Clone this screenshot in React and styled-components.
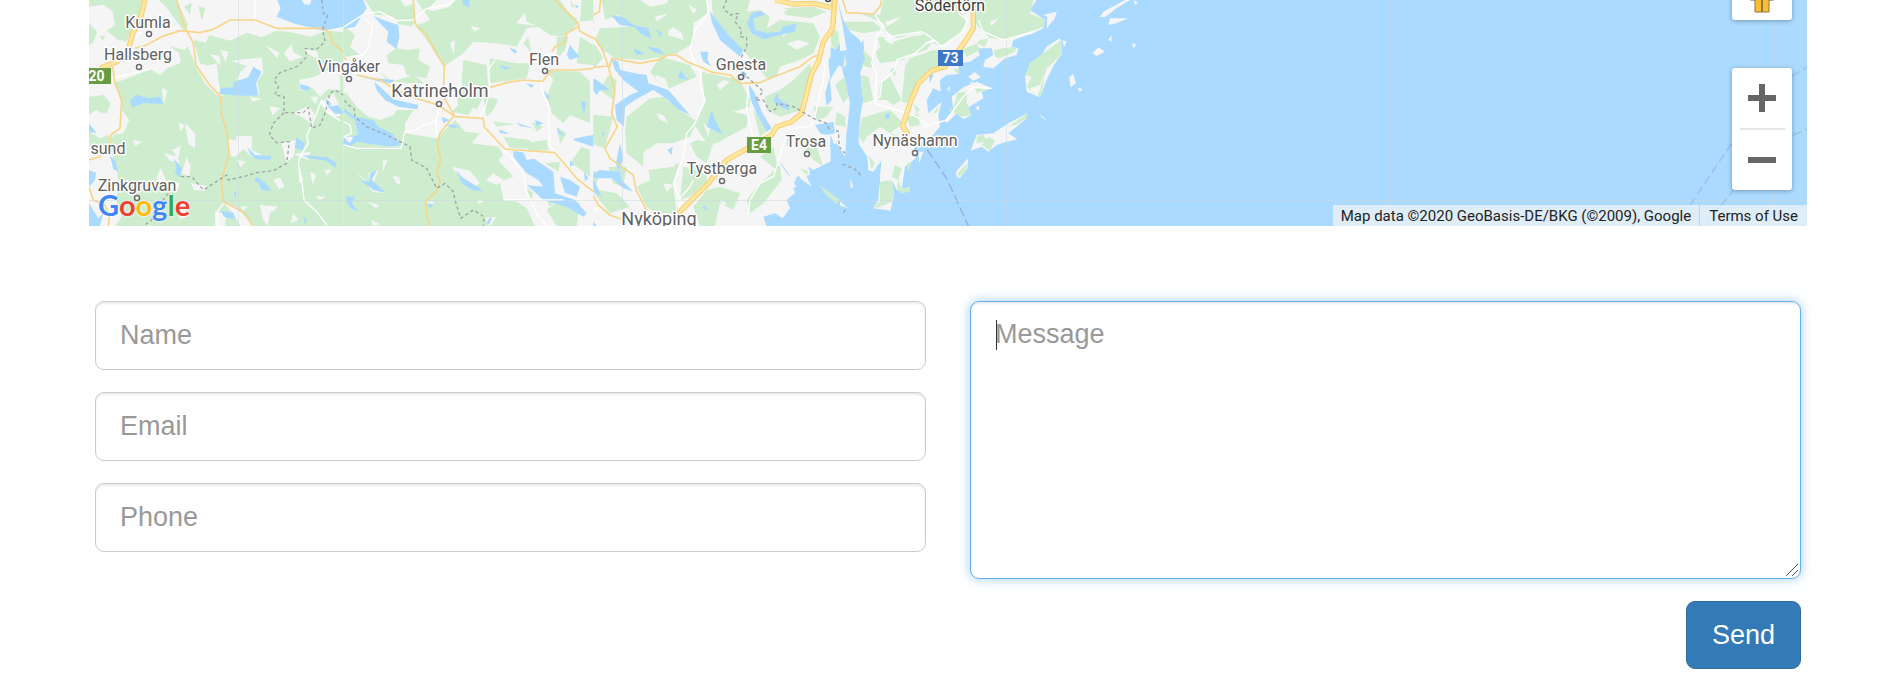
import React from "react";
import styled, { createGlobalStyle } from "styled-components";

const GlobalStyle = createGlobalStyle`
  *, *::before, *::after { box-sizing: border-box; }
  body {
    margin: 0;
    background: #fff;
    color: #333;
    font-family: "Liberation Sans", Arial, sans-serif;
  }
`;

const Page = styled.main`
  padding: 0 82px 13px 89px;
`;

const MapFrame = styled.section`
  position: relative;
  height: 226px;
  overflow: hidden;
  background: #aadaff;
  font-family: Roboto, Arial, sans-serif;
`;

const MapCanvas = styled.svg`
  display: block;
  width: 100%;
  height: 100%;
`;

const PlaceName = styled.text`
  font-size: ${(p) => (p.$size === "large" ? 18 : 16)}px;
  fill: ${(p) => (p.$dark ? "#3c3c3c" : "#616161")};
  stroke: #fff;
  stroke-width: 3px;
  stroke-linejoin: round;
  paint-order: stroke;
  text-anchor: middle;
`;

const ShieldText = styled.text`
  font-size: 14px;
  font-weight: 700;
  fill: #fff;
  text-anchor: middle;
`;

const MapControls = styled.div`
  position: absolute;
  right: 15px;
  bottom: 36px;
  display: flex;
  flex-direction: column;
  gap: 48px;
`;

const ControlBox = styled.div`
  display: flex;
  flex-direction: column;
  align-items: center;
  width: 60px;
  background: #fff;
  border-radius: 3px;
  box-shadow: 0 1px 5px rgba(0, 0, 0, 0.3);
`;

const ControlButton = styled.button`
  display: flex;
  align-items: center;
  justify-content: center;
  width: 60px;
  height: 60px;
  padding: 0;
  border: 0;
  background: transparent;
  cursor: pointer;
`;

const ControlDivider = styled.span`
  width: 45px;
  height: 2px;
  background: #e6e6e6;
`;

const GoogleLink = styled.a`
  position: absolute;
  left: 9px;
  bottom: 3px;
  font-family: Lato, sans-serif;
  font-size: 29px;
  font-weight: 700;
  line-height: 36px;
  text-decoration: none;
  text-shadow: 0 0 2px #fff, 0 0 2px #fff;
`;

const LogoLetter = styled.span`
  color: ${(p) => p.$color};
`;

const Attribution = styled.div`
  position: absolute;
  right: 0;
  bottom: 0;
  display: flex;
  gap: 1px;
  height: 21px;
  color: #222;
  font-size: 15px;
  line-height: 23px;
  white-space: nowrap;
`;

const Credit = styled.span`
  padding: 0 8px;
  background: rgba(245, 245, 245, 0.7);
`;

const TermsLink = styled.a`
  padding: 0 9px;
  background: rgba(245, 245, 245, 0.7);
  color: inherit;
  text-decoration: none;
`;

const ContactForm = styled.form`
  display: grid;
  grid-template-columns: 1fr 1fr;
  gap: 44px;
  padding: 75px 6px 0;
`;

const Column = styled.div`
  display: flex;
  flex-direction: column;
  gap: 22px;
`;

const fieldStyle = `
  display: block;
  width: 100%;
  border: 1px solid #ccc;
  border-radius: 9px;
  background: #fff;
  color: #555;
  font-family: inherit;
  font-size: 27px;
  line-height: 36px;
  box-shadow: inset 0 2px 2px rgba(0, 0, 0, 0.075);
  outline: 0;

  &::placeholder { color: #999; opacity: 1; }
  &:focus {
    border-color: #66afe9;
    box-shadow: inset 0 2px 2px rgba(0, 0, 0, 0.075), 0 0 12px rgba(102, 175, 233, 0.6);
  }
`;

const TextField = styled.input`
  ${fieldStyle}
  height: 69px;
  padding: 0 24px;
`;

const MessageBox = styled.div`
  position: relative;
`;

const MessageField = styled.textarea`
  ${fieldStyle}
  height: 278px;
  padding: 14px 24px;
  resize: vertical;
  caret-color: transparent;

  &:not(:placeholder-shown) { caret-color: auto; }
  &:not(:placeholder-shown) + span { display: none; }
  &:not(:focus) + span { display: none; }
  &::-webkit-resizer { background: transparent; }
`;

const Caret = styled.span`
  position: absolute;
  top: 19px;
  left: 26px;
  width: 1px;
  height: 30px;
  background: #333;
  pointer-events: none;
`;

const ResizeGrip = styled.svg`
  position: absolute;
  right: 2px;
  bottom: 2px;
  pointer-events: none;
`;

const SendButton = styled.button`
  align-self: flex-end;
  height: 68px;
  padding: 0 25px;
  border: 1px solid #2e6da4;
  border-radius: 9px;
  background: #337ab7;
  color: #fff;
  font-family: inherit;
  font-size: 27px;
  line-height: 36px;
  cursor: pointer;
`;

const WATER = "#aadaff";
const LAND = "#f5f5f5";
const FOREST = "#ceedcf";

/* Map sheets: each is drawn at three times its size from its own left edge. */
const sheets = [
  {
    x: 80,
    shapes: [
      [LAND, "M0 0H790V678H0Z"],
      [FOREST, "M27 0H190L180 45 158 80 140 125 112 118 80 92 105 75 98 35 70 14 27 20ZM236 0H290L325 75 312 92 290 65 262 25ZM27 70L52 95 38 130 27 135ZM58 108L76 106 68 124ZM355 20L376 24 366 62ZM312 20L335 8 330 45Z"],
      [FOREST, "M95 250L130 240 210 208 240 225 262 205 302 188 298 160 268 138 312 150 345 120 378 128 388 105 450 122 500 98 545 112 590 92 630 96 690 110 740 92 790 96V678H100L122 640 95 600 62 560 50 500 45 460 90 420 118 385 124 310 105 250Z"],
      [FOREST, "M27 290L70 285 92 310 78 345 48 330 27 345ZM27 395L60 415 85 405 92 430 60 450 27 440ZM52 600L80 620 70 650 48 625Z"],
      [LAND, "M290 95L335 105 360 190 410 205 415 245 428 292 410 285 375 250 350 205 320 130ZM355 205L410 190 415 230ZM388 162L418 168 422 196ZM420 150L445 155 437 186ZM452 182L545 172 550 218 532 245 538 285 515 265 470 238 482 215 500 198ZM556 136L598 158 592 175ZM612 160L635 132 640 158 668 170 630 185ZM672 148L712 154 716 178 690 165ZM658 240L700 232 735 215 780 200V270L745 268 720 290 695 262 660 272ZM690 290L715 290 708 312ZM720 310L760 280 780 320V350L750 345ZM125 330L148 360 130 400 90 405 105 372ZM40 340L78 338 80 365 55 398 38 370ZM245 262L262 272 252 312ZM508 290L545 296 518 305ZM568 318L600 325 578 346ZM640 338L685 318 705 345 690 368 665 350ZM296 365L314 378 300 394ZM315 370L345 400 345 445 325 432ZM160 420L188 425 165 438ZM275 450L302 438 295 475ZM320 472L332 498 328 530 305 520ZM250 458L292 470 300 490 270 482ZM446 418L470 420 468 408 516 408 515 450 545 465 515 470 490 448 465 472 450 465ZM470 480L498 485 482 502ZM604 430L650 420 640 470 620 488ZM640 462L690 455 685 480ZM580 540L600 532 614 560 598 568ZM655 502L670 540 658 550ZM690 515L708 525 698 555ZM732 510L756 508 742 526ZM705 588L738 590 720 600ZM242 505L260 545 300 548 290 575 262 560 240 572 225 545ZM332 550L380 558 375 572 342 570ZM540 615L595 620 570 640 563 678 550 660ZM482 620L505 618 490 632ZM282 620L310 610 325 648 300 658ZM405 635L440 640 435 678H405ZM430 608L470 620 520 678H480L460 640ZM632 670L640 640 655 660Z"],
      [LAND, "M27 450L60 460 90 450 110 500 115 550 108 600 125 650 105 678H27Z"],
      [WATER, "M592 0H665L675 15 690 0H790V80L730 92 640 70 590 50 602 25ZM520 200L545 215 528 250 535 285 505 288 418 282 422 264 460 262 462 246 505 232ZM150 300L170 285 205 295 240 290 250 312 190 310 156 322ZM660 252L690 260 686 272 662 268ZM27 370L50 400 27 395ZM90 468L105 480 115 515 100 508ZM280 475L305 502 300 532 285 520 290 500ZM502 442L525 465 575 468 570 480 530 478 512 465ZM648 412L675 430 668 450 645 445ZM670 465L740 472 770 488 765 504 740 482 682 474ZM530 530L552 545 575 572 545 570 535 548 522 545ZM462 575L470 580 464 598ZM422 632L460 638 465 658 432 650ZM27 610L55 655 70 640 60 678H27ZM27 510L48 518 45 540 27 560ZM672 652L682 660 674 672ZM745 320L775 315 790 340 765 342ZM735 295L755 312 745 322Z"],
      [LAND, "M665 0H695L688 15 675 12Z"],
    ],
    minor: "M95 235L210 208M170 110L205 65M525 60V0M525 62L532 70M780 362L740 335 725 300 710 340 680 408 685 430 660 470 655 490 668 560 672 600 710 635 740 675M412 678V635L430 610",
    roads: "M290 0L312 75 340 130 348 195 385 250 422 290 425 345 442 400 447 460 425 540 430 605 460 620 495 640 518 678M165 145L200 135 245 110 300 92 360 98 400 88 450 60 525 60 590 85 730 85 750 100 758 130 790 155M98 200L105 250 125 300 120 385 92 405 90 430 60 470 27 480M27 560L40 600 75 615 88 650 85 678",
    highway: "M195 0L180 60 158 100 145 150 110 185 60 205",
    borders: "M725 0L730 40 743 45 728 90 735 125 710 148 675 145 680 170 655 198 600 218 582 240 595 260 585 285 612 290 612 338 670 338 685 322 695 385 720 375 735 340 750 280 765 270 790 285M612 338L580 370 568 405 590 428 628 425 620 490 580 512 530 518 490 530 445 540 440 525 370 570 335 530 295 530M265 580L230 625 215 660 190 678",
  },
  {
    x: 330,
    shapes: [
      [LAND, "M0 0H790V678H0Z"],
      [FOREST, "M105 0H212L225 20 250 10 255 60 245 80 205 72 190 50 155 45 135 45ZM258 0H690L715 35 745 70 720 95 700 110 660 105 625 80 590 85 560 140 500 130 430 125 400 160 340 200 300 135 275 100 255 78 300 60 280 30ZM0 105L45 80 75 105 60 140 90 165 48 170 25 145ZM170 165L200 145 235 150 270 145 265 180 300 200 290 235 230 225 220 195 175 190ZM150 215L185 245 250 225 285 250 225 250 170 240Z"],
      [FOREST, "M0 275L50 280 80 320 115 350 150 360 190 345 200 330 250 330 225 370 225 400 320 415 375 360 405 395 450 400 425 430 505 440 520 465 505 480 550 530 510 545 520 600 560 605 590 625 615 678H0ZM400 180L470 195 475 260 440 330 400 295 395 240ZM375 275L410 270 440 310 415 345 365 335 385 315ZM480 175L560 190 600 190 590 235 480 250ZM650 210L750 215 780 245V370L720 345 700 370 665 340 650 290 670 240ZM460 290L505 298 490 330 470 350ZM490 365L555 372 500 380ZM520 410L600 420 610 445 540 445ZM605 365L640 380 620 395ZM580 130L595 110 605 160ZM680 380L710 400 690 432ZM645 490L690 485 685 515ZM720 490L755 440 780 450V530L740 500ZM600 470L650 500 630 510ZM690 20L745 60 700 45ZM755 0H790V60L750 65ZM680 110L715 110 705 150 680 180ZM750 110L790 135V195L740 190ZM580 430L650 420 655 450 600 455ZM700 590L750 610 740 678H680L650 630ZM640 585L680 600 660 620ZM590 560L610 580 600 608Z"],
      [LAND, "M320 0L375 0 360 20 312 32 290 30ZM422 78L453 85 432 95ZM558 70L585 38 590 65 620 78ZM360 130L375 120 372 165ZM0 450L22 445 5 465ZM160 480L172 482 158 515ZM188 528L208 530 212 555 200 550ZM112 605L148 615 138 625ZM122 660L150 672 130 678ZM80 515L120 555 115 520 145 510 130 550 168 580 128 575ZM365 500L420 512 450 550 430 560 400 545ZM290 605L315 605 298 625ZM440 600L462 602 448 612ZM465 655L500 650 480 678ZM468 540L490 520 520 540 500 555ZM530 135L565 142 560 162Z"],
      [WATER, "M0 0H100L110 25 75 80 0 95ZM130 48L160 60 205 75 208 110 200 148 170 125 175 95 155 75ZM398 0H418V24L398 12ZM75 222L130 235 195 240 180 250 150 245 110 235ZM132 245L155 265 190 298 265 315 262 328 205 320 165 300 140 270ZM335 350L360 360 340 370ZM345 372L392 378 370 385ZM15 310L40 325 75 350 130 360 145 380 185 400 215 435 180 440 80 425 60 440 25 435 22 415 85 405 75 360 40 335ZM140 510L125 540 170 580 130 570 90 540 118 545 120 520ZM50 588L75 592 65 610 85 635 62 625 50 605ZM378 510L395 530 460 572 430 572 395 550ZM478 655L486 655 478 672 470 670ZM292 608L312 615 298 625ZM735 12L748 20 738 25ZM536 142L562 152 555 162ZM505 198L540 200 528 210ZM720 135L748 170 720 180 710 165ZM588 250L612 255 605 265ZM640 270L660 290 652 300ZM560 368L608 385 570 378ZM615 360L640 370 620 378ZM508 388L540 402 510 400ZM680 382L705 410 685 400ZM735 415L790 405V440L730 420ZM550 452L590 460 625 485 670 515 675 580 735 600 770 640 760 650 710 620 640 600 590 555 640 560 625 540 590 520 550 470ZM690 530L720 540 750 560 740 590 705 578ZM720 480L730 495 720 500Z"],
      [LAND, "M40 410L70 410 60 430ZM580 455L620 475 590 480Z"],
      [FOREST, "M720 0L735 20 725 22ZM720 250L755 265 735 285ZM705 300L740 310 715 330ZM745 480L765 475 760 500Z"],
      [WATER, "M752 300L768 310 762 345ZM762 515L775 535 765 545Z"],
    ],
    minor: "M0 95L40 82 105 40 150 35 200 62 250 60 290 25 350 15 375 0M105 55L128 80 115 140 100 165 60 170M0 345L60 375 65 400 30 415 25 430 80 445 212 445 225 395 255 392 280 375 315 365 330 320M318 360L322 410M495 180L475 210 480 260 470 310 450 352M635 245L638 280 660 325 655 350 660 440 690 470M520 450L545 475 580 520 590 575 620 640 650 678M520 600L700 600",
    roads: "M250 0L255 70 290 105 325 170 343 195 340 290 375 350M80 225L150 240 200 270 260 295 325 315 375 350 460 355 462 380 525 447 675 458 740 535 790 575M480 262L530 248 580 240 638 244 665 210 740 210 790 205M675 0L745 70 748 92 790 115M665 155L675 140 705 125 710 100 745 80M0 105L18 145 50 180M370 350L330 400 322 430 332 480 320 520 330 545 320 575 288 602 290 645 300 678",
    borders: "M0 272L25 280 55 315 72 325 75 350 110 380 170 405 240 440 245 480 290 505 320 565 345 550 370 575 375 600 392 655 430 630 462 650 460 678",
  },
  {
    x: 580,
    shapes: [
      [LAND, "M0 0H752V678H0Z"],
      [FOREST, "M65 0H180L210 20 260 10 265 0H380L382 40 340 70 340 130 290 160 245 170 190 180 105 175 70 150 45 120 60 85 150 80 115 45 75 60ZM0 60L45 65 25 90 0 95ZM395 0H510L500 35 540 30 570 50 560 85 600 60 700 70 720 110 700 160 660 180 600 200 590 230 560 235 490 150 450 120 400 60ZM600 25L700 20 740 35 690 55 620 45ZM240 170L330 195 350 230 270 265 230 240 210 215ZM365 215L480 240 510 300 500 380 410 430 380 430 340 370 375 310Z"],
      [FOREST, "M140 350L210 295 250 290 330 350 350 365 330 410 280 430 230 430 190 460 190 500 140 460 135 400ZM0 100L50 140 70 175 40 205 0 190ZM85 225L110 240 100 300 60 270ZM330 430L350 420 400 430 380 490 350 470ZM0 340L100 350 75 445 30 430ZM170 560L210 540 205 510 280 500 300 480 280 555 290 640 230 640 200 620ZM310 500L380 510 380 545 330 590 300 600ZM490 320L510 315 500 350 475 345ZM555 290L600 270 640 240 690 190 700 240 665 330 600 350 560 330ZM520 330L570 385 540 410ZM380 570L420 560 480 580 460 630 420 610 405 678H360L340 620ZM530 560L600 495 605 540 550 610 510 640 500 600ZM540 470L580 440 600 480 590 510ZM620 395L640 420 620 440ZM670 440L710 440 730 500 700 480ZM630 555L645 550 640 570ZM85 500L140 500 130 560 100 550ZM0 500L60 520 50 550 0 550ZM30 565L110 580 150 620 90 640ZM700 320L760 320 740 350 710 360ZM410 260L450 280 430 300Z"],
      [LAND, "M265 92L280 82 305 98 310 120 265 105ZM345 90L375 70 400 110 370 130ZM325 12L350 30 340 42ZM580 15L625 30 590 45ZM620 130L655 120 690 130 650 150ZM600 95L640 85 610 110ZM230 340L250 345 265 370 238 358ZM410 255L430 240 450 245 420 270ZM460 335L510 320 500 345ZM370 370L390 385 385 410ZM195 450L330 420 300 490 205 505 190 490ZM250 550L280 555 260 575ZM420 600L440 610 430 620ZM450 645L478 635 475 660ZM580 435L635 445 620 470 590 490ZM150 215L175 190 180 225ZM225 50L265 40 230 65Z"],
      [WATER, "M92 45L130 52 160 75 205 85 215 118 180 100 165 82 120 75ZM228 88L245 98 240 112ZM160 145L195 160 170 165ZM200 140L235 145 255 165 220 155ZM500 70L515 40 545 32 555 45 520 55 525 90 560 98 600 95 610 80 650 70 645 95 600 105 550 118 515 100ZM390 35L450 110 490 150 480 170 420 120 395 65ZM360 155L385 155 382 180 395 200 370 185ZM480 210L500 220 495 238ZM95 178L115 185 120 210 165 220 200 225 205 250 265 270 330 345 290 325 265 300 220 270 165 300 135 320 132 380 110 360 105 315 150 285 175 275 130 240 105 210ZM300 210L325 240 295 235ZM0 215L30 230 50 240 90 270 60 270 50 285 20 245ZM0 320L25 360 0 350ZM65 395L75 400 70 412ZM395 330L405 360 430 405 400 390 380 380ZM505 250L525 280 545 335 575 385 560 395 530 340 512 300ZM580 305L590 280 600 300 630 318 625 330 600 320ZM780 130L745 180 750 230 735 280 740 318 755 300 750 240 780 190ZM705 375L760 365 765 400 740 405 720 400ZM120 430L130 475 115 515 108 490ZM0 410L40 440 20 450 0 445ZM0 515L40 520 60 510 120 515 125 540 160 575 130 565 95 535 40 535 65 590 30 570ZM262 450L278 440 275 465ZM22 640L50 678H32ZM600 485L625 520 640 560 620 545ZM365 620L378 618 380 632Z"],
      [WATER, "M752 405L750 440 770 455 760 480 720 500 700 510 685 500 690 525 650 530 640 555 645 580 620 600 630 625 608 655 585 640 550 650 560 678H780V480Z"],
      [LAND, "M655 495L690 510 680 530 695 560 660 535ZM600 490L650 560 620 570ZM225 225L255 235 265 260 230 240Z"],
      [FOREST, "M660 505L685 512 680 525ZM718 555L780 600 770 612 735 580ZM475 0L490 15 475 20Z"],
    ],
    minor: "M380 0L385 40 345 90 330 150 345 190 362 220 360 250 375 300 345 370 320 400 310 470 280 550 300 600 298 640M505 250L500 330 518 410M0 678L30 640 60 620M340 540L330 560 300 595M505 640L510 600 540 550 580 530 600 470 610 430 640 385 690 380 705 350 715 300 730 240 735 200 720 150M605 372L640 390",
    roads: "M62 0L58 35 0 65M0 92L45 115 70 155 85 200 105 270 95 340 112 380 75 445 90 475 160 525 168 570 200 630M0 205L90 198 95 175 180 190 240 178 265 165 290 165 320 185 360 200 400 218 450 225 480 250 540 248 570 235 660 200 700 170 720 165M0 545L30 570 55 615 90 645 125 658",
    highway: "M585 0L640 12 700 10 752 22M765 0L758 85 730 125 715 185 695 220 665 340 635 365 590 380 575 405 530 430 440 480 385 550 335 600 295 640",
    borders: "M440 0L430 25 450 45 475 40 465 65 485 90 480 110 500 112 500 140 485 170 490 220 550 275 525 300 550 300 570 335 590 325 590 310 640 320 700 355 740 370 750 395",
  },
  {
    x: 830,
    shapes: [
      [LAND, "M0 0H620L600 30 645 60 640 85 610 100 550 120 545 140 565 145 560 165 525 175 490 205 460 200 465 180 490 165 485 145 440 145 450 165 420 185 385 190 388 222 350 225 330 240 332 275 310 265 290 300 295 340 335 305 325 345 330 380 300 415 250 430 258 475 225 500 215 570 240 560 235 575 200 570 185 540 192 580 182 632 130 625 145 600 150 540 155 480 130 515 115 510 112 470 85 430 90 350 100 300 90 220 105 180 100 120 40 205 45 160 0 140Z"],
      [LAND, "M10 190L35 200 60 310 50 400 45 470 20 430 0 440V230Z"],
      [FOREST, "M160 0H375L395 40 410 70 380 110 335 140 300 125 270 95 200 115 170 95 160 70 90 40 150 45ZM420 0H610L600 40 645 60 640 80 540 118 480 115 440 75ZM40 65L130 65 160 90 100 100 60 90ZM45 160L82 165 80 200 45 195ZM100 150L130 180 125 205 95 195ZM130 115L160 110 175 130 240 110 280 105 315 115 290 150 240 165 220 180 150 190 140 170ZM240 175L310 150 335 155 330 200 300 215 260 250 230 310 215 305 225 200ZM92 225L115 230 130 300 100 310ZM150 250L180 230 215 300 190 315 170 300 145 300ZM180 210L200 200 195 230ZM95 355L140 340 180 330 220 370 180 400 150 380 110 410 100 430 85 410ZM230 350L265 340 270 375 240 380ZM180 400L215 410 200 430ZM395 150L440 130 450 150 410 170ZM450 120L475 115 465 140 440 130ZM490 150L520 145 560 140 555 155 510 175 495 170ZM370 210L385 205 388 225ZM115 465L135 490 125 510ZM195 495L215 505 205 540 185 530ZM205 540L215 565 235 565 240 575 215 580 200 565ZM150 545L185 540 192 580 185 605 140 625 132 615 150 605ZM232 490L245 485 235 515ZM250 310L270 330 260 340ZM0 85L25 95 30 150 5 140ZM15 255L45 230 55 290 40 310ZM20 335L45 350 48 380 15 375Z"],
      [LAND, "M165 65L215 50 195 65 170 80ZM280 130L310 118 325 125ZM480 65L505 55 485 78ZM108 112L140 105 150 140 135 160 120 150ZM160 110L185 105 190 135 165 120Z"],
      [WATER, "M22 0L35 60 50 150 0 160V190L20 175 45 160 52 200 60 260 65 345 50 400 50 470 90 460 82 400 90 360 95 280 90 205 105 180 90 120 60 95 40 60ZM615 145L630 140 622 152ZM295 210L310 225 300 250ZM165 345L180 335 178 355 165 358Z"],
      [LAND, "M650 85L652 50 640 45 680 35 675 55ZM810 50L820 35 885 0H900L855 28 825 52ZM912 0L925 8 915 14ZM835 75L840 55 895 55 860 70ZM835 120L845 105 844 125ZM907 130L918 133 910 147ZM788 160L805 142 825 155 800 168ZM698 120L710 125 702 142ZM585 230L600 190 635 165 650 140 690 114 696 160 672 195 650 240 630 292 590 275ZM718 230L730 222 738 250 722 262ZM742 264L758 266 750 276ZM630 342L652 362 635 352ZM352 265L360 258 358 275ZM414 230L435 216 452 232 430 242ZM345 360L370 330 365 290 400 262 440 245 485 265 455 275 460 295 410 325 425 345 400 358 380 340 350 370ZM436 325L448 315 446 332ZM422 452L440 404 490 400 535 370 592 340 590 355 535 400 562 418 530 425 500 435 475 455 455 440ZM378 515L415 474 412 505 390 535 380 530ZM306 340L330 310 325 335 310 350ZM155 475L185 470 182 500 165 540 150 530ZM60 535L70 560 62 565ZM265 455L280 455 268 490ZM0 580L55 625 25 615ZM418 246L445 250 430 258Z"],
      [FOREST, "M585 225L600 190 660 145 695 118 696 160 665 192 650 205 632 292 590 260 605 230ZM355 330L370 325 382 278 412 275 410 305 425 345 395 350ZM455 435L475 410 495 420 480 452ZM440 410L460 402 470 425 440 430ZM535 380L592 340 590 355 555 375ZM382 520L412 490 405 515 390 530ZM308 340L328 318 320 338ZM0 585L28 605 20 612ZM435 262L470 268 440 280Z"],
      [LAND, "M600 265L630 255 640 230 655 205 640 240 630 270 620 290ZM650 60L670 40 665 60Z"],
    ],
    minor: "M135 45L160 80 140 110 125 190 140 220 135 310 200 330 260 350 300 380M170 95L180 110 275 95 300 110 335 140 400 95 412 60 385 40M315 120L290 130 255 160 200 180 195 210 155 245 150 290 140 295M445 60L460 95 520 120 610 95M280 380L350 360 400 290 430 262 485 265",
    roads: "M38 0L50 38 130 42 150 20 155 0",
    highway: "M10 0V60L0 105M430 30V85L405 125 380 160 345 200 305 212 265 250 240 310 218 378 235 405",
    borders: "M0 393L25 393 28 440 45 460M38 492L75 508 92 525M40 638L50 626",
    ferry: "M258 430L285 440 350 535 415 678",
  },
];

const places = [
  { name: "Kumla", x: 148, y: 28, dot: [149, 34] },
  { name: "Hallsberg", x: 138, y: 60, dot: [139, 67] },
  { name: "sund", x: 108, y: 154 },
  { name: "Zinkgruvan", x: 137, y: 191, dot: [137, 198] },
  { name: "Vingåker", x: 349, y: 72, dot: [349, 79] },
  { name: "Katrineholm", x: 440, y: 97, size: "large", dot: [439, 104] },
  { name: "Flen", x: 544, y: 65, dot: [545, 71] },
  { name: "Gnesta", x: 741, y: 70, dot: [741, 77] },
  { name: "Tystberga", x: 722, y: 174, dot: [722, 181] },
  { name: "Trosa", x: 806, y: 147, dot: [807, 154] },
  { name: "Nynäshamn", x: 915, y: 146, dot: [915, 153] },
  { name: "Nyköping", x: 659, y: 225, size: "large" },
  { name: "Södertörn", x: 950, y: 11, dark: true },
];

const shields = [
  { label: "E20", x: 74, y: 68, width: 37, color: "#669d42" },
  { label: "E4", x: 747, y: 137, width: 24, color: "#669d42" },
  { label: "73", x: 938, y: 50, width: 25, color: "#3d78c8" },
];

const gridColumns = [238, 622, 1006, 1390, 1774];

function MapSheet({ sheet }) {
  return (
    <g transform={`translate(${sheet.x} 0) scale(0.33333)`} fill="none" strokeLinejoin="round">
      {sheet.shapes.map(([color, d], i) => (
        <path key={i} d={d} fill={color} />
      ))}
      <path d={sheet.minor} stroke="#fff" strokeWidth="4" />
      <path d={sheet.roads} stroke="#f7d58a" strokeWidth="5" />
      {sheet.highway && (
        <>
          <path d={sheet.highway} stroke="#f5cf77" strokeWidth="16" />
          <path d={sheet.highway} stroke="#ffe69b" strokeWidth="10" />
        </>
      )}
      <path d={sheet.borders} stroke="#a0a5a6" strokeWidth="4" strokeDasharray="10 8" />
      {sheet.ferry && (
        <path d={sheet.ferry} stroke="#8db1e4" strokeWidth="4" strokeDasharray="28 12" />
      )}
    </g>
  );
}

function TerrainMap() {
  return (
    <MapCanvas viewBox="89 0 1718 226" preserveAspectRatio="xMidYMid slice" role="img" aria-label="Map">
      <rect x="89" width="1718" height="226" fill={WATER} />
      {[...sheets].reverse().map((sheet) => (
        <MapSheet key={sheet.x} sheet={sheet} />
      ))}
      <g stroke="#ccd8e0" strokeOpacity="0.5">
        <path d="M89 200.500H1807" />
        {gridColumns.map((x) => (
          <path key={x} d={`M${x + 0.5} 0V226`} />
        ))}
      </g>
      <g fill="none" stroke="#98c2f3" strokeWidth="1.500" strokeDasharray="9 4">
        <path d="M1690 205L1732 143 1750 101 1807 67" />
        <path d="M1705 226L1734 189 1760 150 1807 129" />
      </g>
      {shields.map((s) => (
        <g key={s.label}>
          <rect x={s.x} y={s.y} width={s.width} height="16" fill={s.color} />
          <ShieldText x={s.x + s.width / 2} y={s.y + 13}>{s.label}</ShieldText>
        </g>
      ))}
      {places.map((p) => (
        <g key={p.name}>
          {p.dot && (
            <circle cx={p.dot[0]} cy={p.dot[1]} r="2.500" fill="#fff" stroke="#6b6b6b" strokeWidth="1.500" />
          )}
          <PlaceName x={p.x} y={p.y} $size={p.size} $dark={p.dark}>{p.name}</PlaceName>
        </g>
      ))}
      <circle cx="828" cy="-1" r="2.500" fill="#fff" stroke="#444" strokeWidth="1.500" />
    </MapCanvas>
  );
}

const logoLetters = [
  ["G", "#4285f4"],
  ["o", "#ea4335"],
  ["o", "#fbbc05"],
  ["g", "#4285f4"],
  ["l", "#34a853"],
  ["e", "#ea4335"],
];

function PegmanIcon() {
  return (
    <svg width="26" height="46" viewBox="0 0 26 46" aria-hidden="true">
      <circle cx="13" cy="7" r="6" fill="#fbbf2d" stroke="#8b6d2b" />
      <path d="M4 14H22V33H20V45H6V33H4Z" fill="#fbbf2d" stroke="#8b744a" />
      <path d="M1 33H6M20 33H25" stroke="#777" />
      <path d="M13 33V45" stroke="#8b744a" strokeWidth="2" />
    </svg>
  );
}

export default function App() {
  return (
    <>
      <GlobalStyle />
      <Page>
        <MapFrame>
          <TerrainMap />
          <MapControls>
            <ControlBox>
              <ControlButton type="button" aria-label="Street View">
                <PegmanIcon />
              </ControlButton>
            </ControlBox>
            <ControlBox>
              <ControlButton type="button" aria-label="Zoom in">
                <svg width="28" height="28" viewBox="0 0 28 28" aria-hidden="true">
                  <path d="M0 11H11V0H17V11H28V17H17V28H11V17H0Z" fill="#666" />
                </svg>
              </ControlButton>
              <ControlDivider />
              <ControlButton type="button" aria-label="Zoom out">
                <svg width="28" height="28" viewBox="0 0 28 28" aria-hidden="true">
                  <path d="M0 11H28V17H0Z" fill="#666" />
                </svg>
              </ControlButton>
            </ControlBox>
          </MapControls>
          <GoogleLink href="#map" aria-label="Google">
            {logoLetters.map(([letter, color], i) => (
              <LogoLetter key={i} $color={color}>{letter}</LogoLetter>
            ))}
          </GoogleLink>
          <Attribution>
            <Credit>Map data ©2020 GeoBasis-DE/BKG (©2009), Google</Credit>
            <TermsLink href="#terms">Terms of Use</TermsLink>
          </Attribution>
        </MapFrame>
        <ContactForm onSubmit={(e) => e.preventDefault()}>
          <Column>
            <TextField type="text" name="name" placeholder="Name" aria-label="Name" />
            <TextField type="email" name="email" placeholder="Email" aria-label="Email" />
            <TextField type="tel" name="phone" placeholder="Phone" aria-label="Phone" />
          </Column>
          <Column>
            <MessageBox>
              <MessageField name="message" placeholder="Message" aria-label="Message" autoFocus />
              <Caret />
              <ResizeGrip width="14" height="14" viewBox="0 0 14 14" aria-hidden="true">
                <path d="M1 13L13 1M7 13L13 7" fill="none" stroke="#555" />
              </ResizeGrip>
            </MessageBox>
            <SendButton type="submit">Send</SendButton>
          </Column>
        </ContactForm>
      </Page>
    </>
  );
}
